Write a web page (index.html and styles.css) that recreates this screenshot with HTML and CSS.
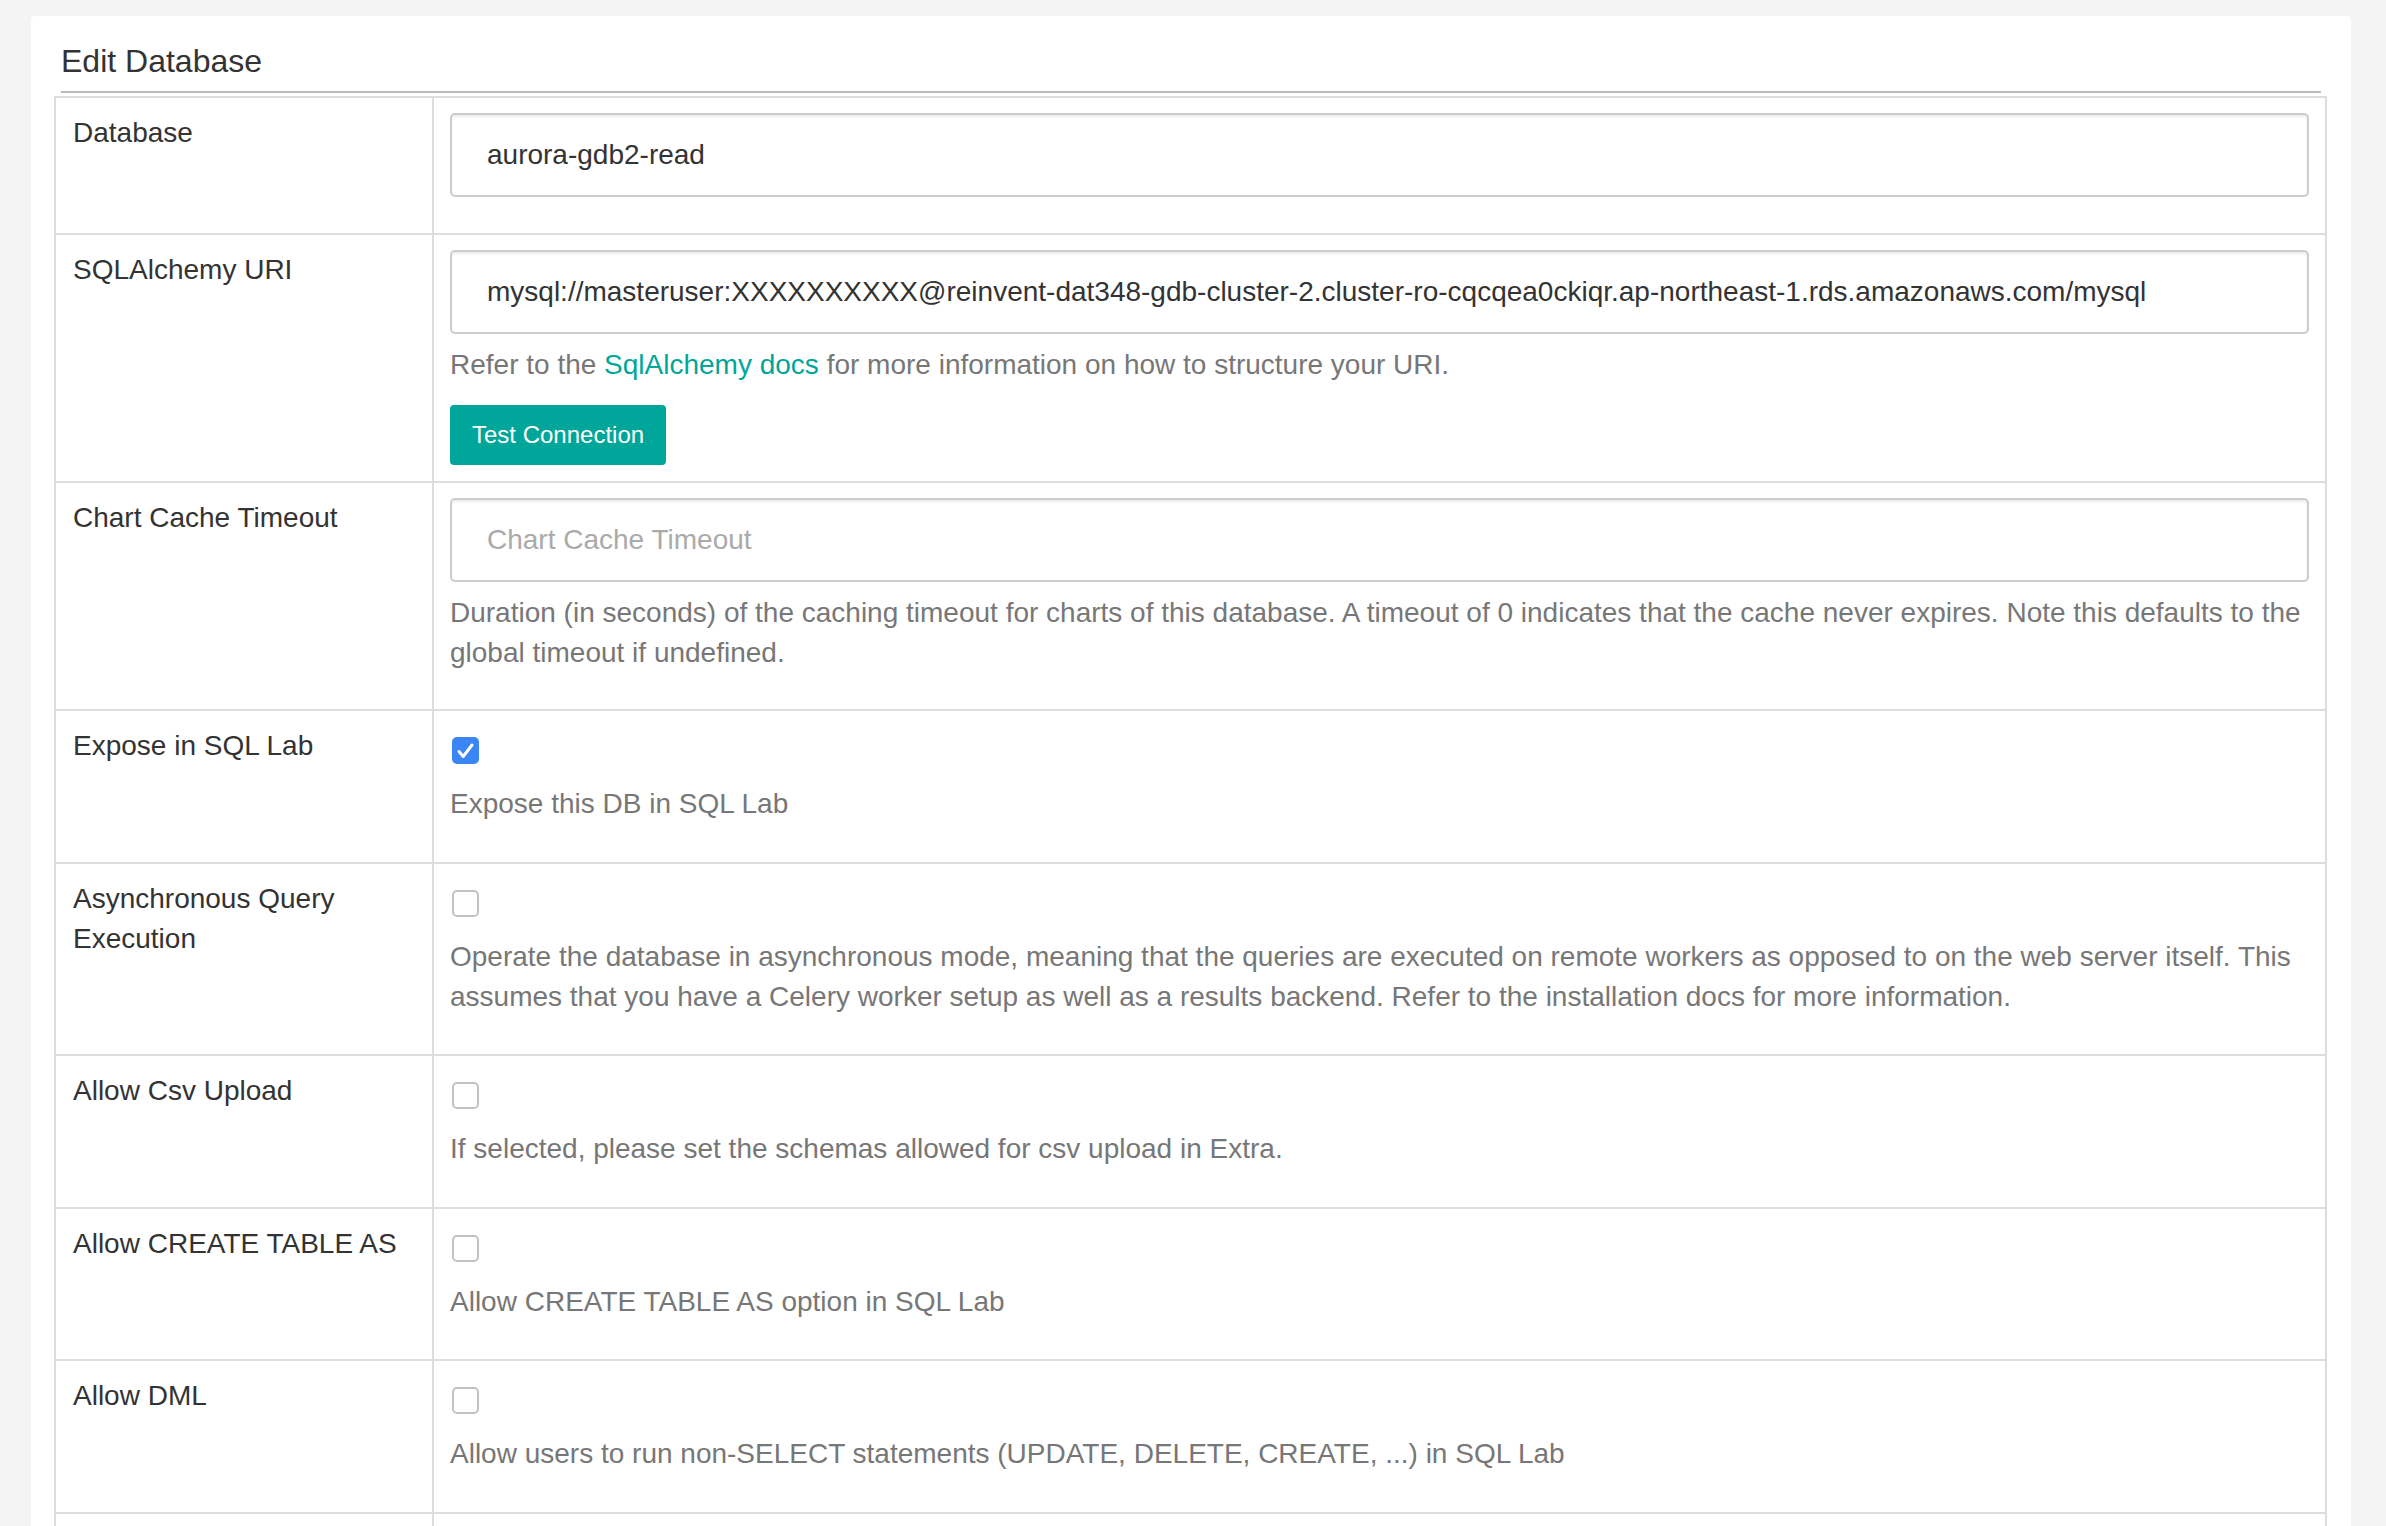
FILE: index.html
```html
<!DOCTYPE html>
<html lang="en">
<head>
<meta charset="utf-8">
<title>Edit Database</title>
<link rel="stylesheet" href="styles.css">
</head>
<body>
<div class="panel">
  <h2 class="panel-title">Edit Database</h2>
  <div class="form-table">
    <div class="form-row">
      <div class="label-cell">Database</div>
      <div class="field-cell">
        <input class="text-input solo" type="text" value="aurora-gdb2-read">
      </div>
    </div>
    <div class="form-row">
      <div class="label-cell">SQLAlchemy URI</div>
      <div class="field-cell">
        <input class="text-input" type="text" value="mysql://masteruser:XXXXXXXXXX@reinvent-dat348-gdb-cluster-2.cluster-ro-cqcqea0ckiqr.ap-northeast-1.rds.amazonaws.com/mysql">
        <p class="help after-input">Refer to the <a class="link" href="#">SqlAlchemy docs</a> for more information on how to structure your URI.</p>
        <button class="btn-test" type="button">Test Connection</button>
      </div>
    </div>
    <div class="form-row">
      <div class="label-cell">Chart Cache Timeout</div>
      <div class="field-cell">
        <input class="text-input" type="text" placeholder="Chart Cache Timeout">
        <p class="help after-input last">Duration (in seconds) of the caching timeout for charts of this database. A timeout of 0 indicates that the cache never expires. Note this defaults to the global timeout if undefined.</p>
      </div>
    </div>
    <div class="form-row">
      <div class="label-cell">Expose in SQL Lab</div>
      <div class="field-cell">
        <span class="checkbox checked"><svg viewBox="0 0 27 27" width="27" height="27"><path d="M7 14.5 L11.2 19.5 L20 8" fill="none" stroke="#fff" stroke-width="3" stroke-linecap="round" stroke-linejoin="round"/></svg></span>
        <p class="help after-check">Expose this DB in SQL Lab</p>
      </div>
    </div>
    <div class="form-row">
      <div class="label-cell">Asynchronous Query Execution</div>
      <div class="field-cell">
        <span class="checkbox"></span>
        <p class="help after-check">Operate the database in asynchronous mode, meaning that the queries are executed on remote workers as opposed to on the web server itself. This assumes that you have a Celery worker setup as well as a results backend. Refer to the installation docs for more information.</p>
      </div>
    </div>
    <div class="form-row">
      <div class="label-cell">Allow Csv Upload</div>
      <div class="field-cell">
        <span class="checkbox"></span>
        <p class="help after-check">If selected, please set the schemas allowed for csv upload in Extra.</p>
      </div>
    </div>
    <div class="form-row">
      <div class="label-cell">Allow CREATE TABLE AS</div>
      <div class="field-cell">
        <span class="checkbox"></span>
        <p class="help after-check">Allow CREATE TABLE AS option in SQL Lab</p>
      </div>
    </div>
    <div class="form-row">
      <div class="label-cell">Allow DML</div>
      <div class="field-cell">
        <span class="checkbox"></span>
        <p class="help after-check">Allow users to run non-SELECT statements (UPDATE, DELETE, CREATE, ...) in SQL Lab</p>
      </div>
    </div>
    <div class="form-row">
      <div class="label-cell">Force Ctas Schema</div>
      <div class="field-cell">
        <input class="text-input solo" type="text" placeholder="Force Ctas Schema">
      </div>
    </div>
  </div>
</div>
</body>
</html>
```

FILE: styles.css
```css
html, body {
  margin: 0;
  padding: 0;
}

body {
  background: #f4f4f4;
  font-family: "Liberation Sans", Arial, Helvetica, sans-serif;
  font-size: 28px;
  line-height: 40px;
  color: #333;
}

.panel {
  margin: 16px 35px 0 31px;
  padding: 0 24px 40px 23px;
  background: #fff;
  border-radius: 4px;
}

.panel-title {
  margin: 0 6px 3px 7px;
  padding: 27px 0 12px;
  font-size: 32px;
  line-height: 36px;
  font-weight: normal;
  color: #333;
  border-bottom: 2px solid #bbb;
}

.form-table {
  border: 2px solid #ddd;
  border-bottom: none;
}

.form-row {
  display: grid;
  grid-template-columns: 378px 1fr;
  border-bottom: 2px solid #ddd;
}

.label-cell {
  padding: 15px 16px 16px 17px;
  border-right: 2px solid #ddd;
  color: #333;
}

.field-cell {
  padding: 15px 16px 16px;
  display: flex;
  flex-direction: column;
  align-items: flex-start;
}

.text-input {
  box-sizing: border-box;
  display: block;
  width: 100%;
  height: 84px;
  margin: 0;
  padding: 0 35px;
  border: 2px solid #ccc;
  border-radius: 5px;
  box-shadow: inset 0 2px 2px rgba(0, 0, 0, 0.075);
  background: #fff;
  font-family: "Liberation Sans", Arial, Helvetica, sans-serif;
  font-size: 28px;
  color: #333;
  outline: none;
}

.text-input::placeholder {
  color: #aaa;
}

.text-input.solo {
  margin-bottom: 20px;
}

.help {
  margin: 0;
  color: #777;
}

.help.after-input {
  margin: 11px 0 20px;
}

.help.after-check {
  margin: 20px 0 21.5px;
}

.link {
  color: #00a699;
  text-decoration: none;
}

.btn-test {
  height: 60px;
  margin: 0;
  padding: 0 22px;
  border: none;
  border-radius: 4px;
  background: #00a699;
  color: #fff;
  font-family: "Liberation Sans", Arial, Helvetica, sans-serif;
  font-size: 24px;
  line-height: 60px;
  cursor: pointer;
}

.checkbox {
  box-sizing: border-box;
  display: block;
  width: 27px;
  height: 27px;
  margin: 11px 0 0 2px;
  border: 2px solid #c2c2c2;
  border-radius: 5px;
  background: #fff;
}

.checkbox.checked {
  border: none;
  background: #3b86f6;
}

.checkbox svg {
  display: block;
}
```
